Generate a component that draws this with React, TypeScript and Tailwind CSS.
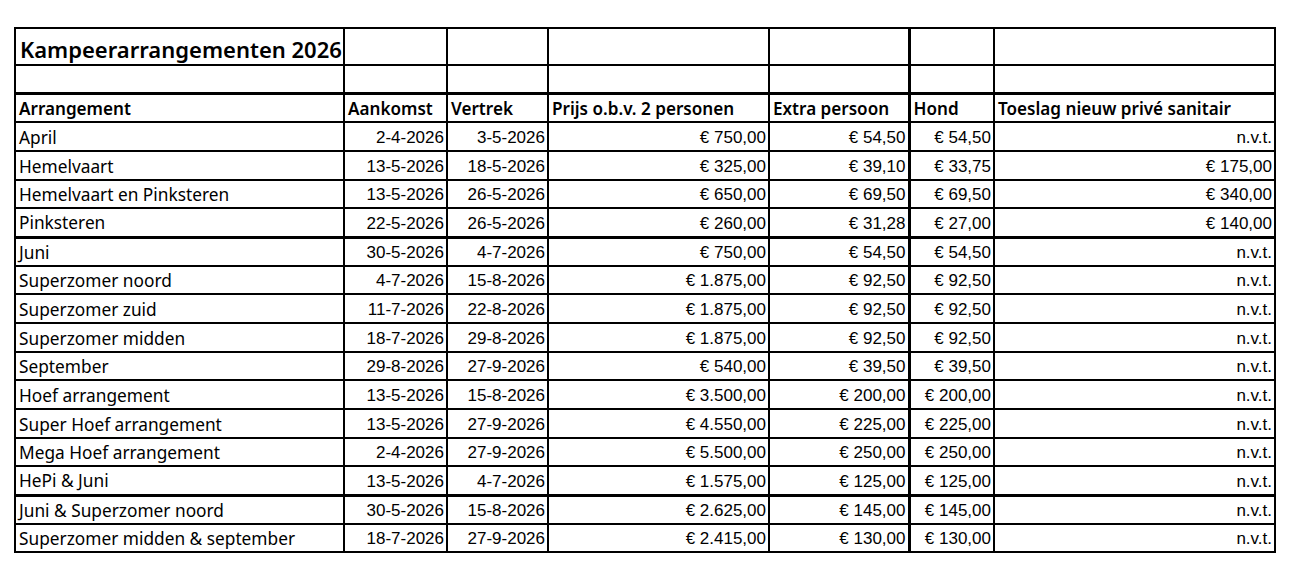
type Row = {
    name: string;
    arrival: string;
    departure: string;
    price: string;
    extra: string;
    dog: string;
    sanitary: string;
    thick?: boolean;
};

const rows: Row[] = [
    { name: "April", arrival: "2-4-2026", departure: "3-5-2026", price: "€ 750,00", extra: "€ 54,50", dog: "€ 54,50", sanitary: "n.v.t." },
    { name: "Hemelvaart", arrival: "13-5-2026", departure: "18-5-2026", price: "€ 325,00", extra: "€ 39,10", dog: "€ 33,75", sanitary: "€ 175,00" },
    { name: "Hemelvaart en Pinksteren", arrival: "13-5-2026", departure: "26-5-2026", price: "€ 650,00", extra: "€ 69,50", dog: "€ 69,50", sanitary: "€ 340,00" },
    { name: "Pinksteren", arrival: "22-5-2026", departure: "26-5-2026", price: "€ 260,00", extra: "€ 31,28", dog: "€ 27,00", sanitary: "€ 140,00", thick: true },
    { name: "Juni", arrival: "30-5-2026", departure: "4-7-2026", price: "€ 750,00", extra: "€ 54,50", dog: "€ 54,50", sanitary: "n.v.t." },
    { name: "Superzomer noord", arrival: "4-7-2026", departure: "15-8-2026", price: "€ 1.875,00", extra: "€ 92,50", dog: "€ 92,50", sanitary: "n.v.t." },
    { name: "Superzomer zuid", arrival: "11-7-2026", departure: "22-8-2026", price: "€ 1.875,00", extra: "€ 92,50", dog: "€ 92,50", sanitary: "n.v.t." },
    { name: "Superzomer midden", arrival: "18-7-2026", departure: "29-8-2026", price: "€ 1.875,00", extra: "€ 92,50", dog: "€ 92,50", sanitary: "n.v.t." },
    { name: "September", arrival: "29-8-2026", departure: "27-9-2026", price: "€ 540,00", extra: "€ 39,50", dog: "€ 39,50", sanitary: "n.v.t." },
    { name: "Hoef arrangement", arrival: "13-5-2026", departure: "15-8-2026", price: "€ 3.500,00", extra: "€ 200,00", dog: "€ 200,00", sanitary: "n.v.t." },
    { name: "Super Hoef arrangement", arrival: "13-5-2026", departure: "27-9-2026", price: "€ 4.550,00", extra: "€ 225,00", dog: "€ 225,00", sanitary: "n.v.t." },
    { name: "Mega Hoef arrangement", arrival: "2-4-2026", departure: "27-9-2026", price: "€ 5.500,00", extra: "€ 250,00", dog: "€ 250,00", sanitary: "n.v.t." },
    { name: "HePi & Juni", arrival: "13-5-2026", departure: "4-7-2026", price: "€ 1.575,00", extra: "€ 125,00", dog: "€ 125,00", sanitary: "n.v.t.", thick: true },
    { name: "Juni & Superzomer noord", arrival: "30-5-2026", departure: "15-8-2026", price: "€ 2.625,00", extra: "€ 145,00", dog: "€ 145,00", sanitary: "n.v.t." },
    { name: "Superzomer midden & september", arrival: "18-7-2026", departure: "27-9-2026", price: "€ 2.415,00", extra: "€ 130,00", dog: "€ 130,00", sanitary: "n.v.t." },
];

// 29,29,28 pattern keeps the grid lines on the same pixels as the sheet
const rowHeights = ["h-[29px]", "h-[29px]", "h-[28px]"];

const textFont = "font-['Noto_Sans',sans-serif] text-[17.3px] text-black";
const headFont = "font-['Noto_Sans',sans-serif] text-[17.1px] font-semibold text-black";
const numFont = "font-['Liberation_Sans',Arial,sans-serif] text-[17px] text-black";

export default function App() {
    return (
        <div className="w-[1305px] h-[580px] bg-white pt-[27px] pl-[14px]">
            <table className="w-[1262px] table-fixed border-collapse border-2 border-black leading-none">
                <colgroup>
                    <col className="w-[329px]" />
                    <col className="w-[103px]" />
                    <col className="w-[101px]" />
                    <col className="w-[221px]" />
                    <col className="w-[140px]" />
                    <col className="w-[85px]" />
                    <col className="w-[281px]" />
                </colgroup>
                <tbody>
                    <tr className="h-[37px]">
                        <td className="border-2 border-black pl-[4px] pb-[4px] align-bottom font-['Noto_Sans',sans-serif] text-[22px] font-semibold text-black whitespace-nowrap">
                            Kampeerarrangementen 2026
                        </td>
                        <td className="border-2 border-black" />
                        <td className="border-2 border-black" />
                        <td className="border-2 border-black" />
                        <td className="border-2 border-black" />
                        <td className="border-2 border-black border-l-[3px]" />
                        <td className="border-2 border-black" />
                    </tr>
                    <tr className="h-[28px]">
                        <td className="border-2 border-b-[3px] border-black" />
                        <td className="border-2 border-b-[3px] border-black" />
                        <td className="border-2 border-b-[3px] border-black" />
                        <td className="border-2 border-b-[3px] border-black" />
                        <td className="border-2 border-b-[3px] border-black" />
                        <td className="border-2 border-b-[3px] border-l-[3px] border-black" />
                        <td className="border-2 border-b-[3px] border-black" />
                    </tr>
                    <tr className="h-[29px]">
                        {["Arrangement", "Aankomst", "Vertrek", "Prijs o.b.v. 2 personen", "Extra persoon", "Hond", "Toeslag nieuw privé sanitair"].map((h, i) => (
                            <td
                                key={h}
                                className={`border-2 border-black ${i === 5 ? "border-l-[3px]" : ""} px-[3px] pb-[4px] align-bottom ${headFont} whitespace-nowrap overflow-hidden`}
                            >
                                {h}
                            </td>
                        ))}
                    </tr>
                    {rows.map((r, idx) => {
                        const b = r.thick ? "border-b-[3px]" : "";
                        return (
                            <tr key={r.name} className={rowHeights[idx % 3]}>
                                <td className={`border-2 border-black ${b} px-[3px] pb-[4px] align-bottom ${textFont} whitespace-nowrap`}>
                                    {r.name}
                                </td>
                                <td className={`border-2 border-black ${b} px-[2px] pb-[4px] align-bottom text-right ${numFont}`}>{r.arrival}</td>
                                <td className={`border-2 border-black ${b} px-[2px] pb-[4px] align-bottom text-right ${numFont}`}>{r.departure}</td>
                                <td className={`border-2 border-black ${b} px-[2px] pb-[4px] align-bottom text-right ${numFont}`}>{r.price}</td>
                                <td className={`border-2 border-black ${b} px-[2px] pb-[4px] align-bottom text-right ${numFont}`}>{r.extra}</td>
                                <td className={`border-2 border-l-[3px] border-black ${b} px-[2px] pb-[4px] align-bottom text-right ${numFont}`}>{r.dog}</td>
                                <td className={`border-2 border-black ${b} px-[2px] pb-[4px] align-bottom text-right ${numFont}`}>{r.sanitary}</td>
                            </tr>
                        );
                    })}
                </tbody>
            </table>
        </div>
    );
}
